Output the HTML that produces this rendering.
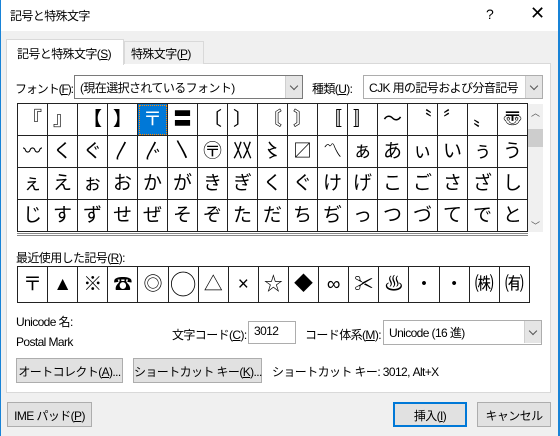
<!DOCTYPE html>
<html><head><meta charset="utf-8"><style>
*{box-sizing:border-box;margin:0;padding:0}
body{width:560px;height:436px;overflow:hidden;background:#f0f0f0;font-family:"Liberation Sans","Noto Sans CJK JP",sans-serif;font-size:12px;letter-spacing:-0.6px;color:#000;position:relative}
.a{position:absolute;white-space:nowrap}
.title{left:0;top:0;width:560px;height:31px;background:#fff}
.bl{left:0;top:0;width:1px;height:436px;background:#1883d7}
.br{left:558px;top:0;width:2px;height:436px;background:#1883d7}
.panel{left:6px;top:63px;width:545px;height:330px;background:#fff;border:1px solid #d9d9d9}
.tab1{left:6px;top:39px;width:118px;height:26px;background:#fff;border:1px solid #d9d9d9;border-bottom:none;padding:5px 0 0 10px;z-index:2}
.tab2{left:124px;top:41px;width:80px;height:23px;background:#f0f0f0;border:1px solid #d9d9d9;border-bottom:none;padding:3px 0 0 6px}
.combo{background:#fff;border:1px solid #7a7a7a;height:24px;padding:3px 0 0 5px;overflow:hidden}
.dd{position:absolute;right:0;top:0;width:17px;height:22px;background:#e5e5e5;border-left:1px solid #cfcfcf}
.dd:after{content:"";position:absolute;left:5px;top:7px;width:5px;height:5px;border-right:1px solid #555;border-bottom:1px solid #555;transform:rotate(45deg)}
table{border-collapse:collapse;position:absolute;letter-spacing:0}
td{border:1px solid #222;text-align:center;padding:0;font-size:19px;line-height:20px;overflow:hidden}
.grid td{width:30px;height:32px}
.sel{background:#0078d7;color:#fff;outline:1px dotted #f80;outline-offset:-2px}
.btn{background:#e1e1e1;border:1px solid #adadad;text-align:center;padding-top:4px;height:25px}
u{text-decoration:underline}
</style></head><body>
<div class="a title"></div>
<div class="a bl"></div><div class="a br"></div>
<div class="a" style="left:10px;top:7px">記号と特殊文字</div>
<div class="a" style="left:486px;top:6px;font-size:14px">?</div>
<div class="a" style="left:530px;top:3px;font-size:18px;font-weight:300">✕</div>
<div class="a panel"></div>
<div class="a tab1">記号と特殊文字(<u>S</u>)</div>
<div class="a tab2">特殊文字(<u>P</u>)</div>
<div class="a" style="left:15px;top:80px;letter-spacing:-1.1px">フォント(<u>F</u>):</div>
<div class="a combo" style="left:74px;top:75px;width:229px">(現在選択されているフォント)<span class="dd"></span></div>
<div class="a" style="left:312px;top:80px">種類(<u>U</u>):</div>
<div class="a combo" style="left:363px;top:75px;width:180px;border-color:#adadad">CJK 用の記号および分音記号<span class="dd"></span></div>
<table class="grid" style="left:17px;top:103px;width:511px;border:1px solid #888">
<tr><td>『</td><td>』</td><td><b>【</b></td><td><b>】</b></td><td class="sel">〒</td><td><b>〓</b></td><td>〔</td><td>〕</td><td>〘</td><td>〙</td><td>〚</td><td>〛</td><td>〜</td><td>〝</td><td>〞</td><td>〟</td><td>〠</td></tr>
<tr><td>〰</td><td>く</td><td>ぐ</td><td>〳</td><td>〴</td><td>〵</td><td>〶</td><td>〷</td><td>〻</td><td>〼</td><td>〽</td><td>ぁ</td><td>あ</td><td>ぃ</td><td>い</td><td>ぅ</td><td>う</td></tr>
<tr><td>ぇ</td><td>え</td><td>ぉ</td><td>お</td><td>か</td><td>が</td><td>き</td><td>ぎ</td><td>く</td><td>ぐ</td><td>け</td><td>げ</td><td>こ</td><td>ご</td><td>さ</td><td>ざ</td><td>し</td></tr>
<tr><td>じ</td><td>す</td><td>ず</td><td>せ</td><td>ぜ</td><td>そ</td><td>ぞ</td><td>た</td><td>だ</td><td>ち</td><td>ぢ</td><td>っ</td><td>つ</td><td>づ</td><td>て</td><td>で</td><td>と</td></tr>
</table>
<div class="a" style="left:528px;top:104px;width:15px;height:128px;background:#f0f0f0"></div>
<div class="a" style="left:531px;top:106px;font-size:9px;color:#555">︿</div>
<div class="a" style="left:528px;top:129px;width:15px;height:18px;background:#cdcdcd"></div>
<div class="a" style="left:531px;top:219px;font-size:9px;color:#555">﹀</div>
<div class="a" style="left:17px;top:233px;width:511px;height:3px;border-top:1px solid #888;border-bottom:1px solid #888"></div>
<div class="a" style="left:16px;top:249px">最近使用した記号(<u>R</u>):</div>
<table class="grid" style="left:17px;top:266px;width:513px;border:1px solid #888">
<tr style="height:36px"><td>〒</td><td>▲</td><td>※</td><td>☎</td><td>◎</td><td style="font-size:26px">◯</td><td>△</td><td>×</td><td>☆</td><td>◆</td><td>∞</td><td>✂</td><td>♨</td><td>・</td><td>・</td><td>㈱</td><td>㈲</td></tr>
</table>
<div class="a" style="left:16px;top:313px">Unicode 名:</div>
<div class="a" style="left:16px;top:335px">Postal Mark</div>
<div class="a" style="left:172px;top:326px">文字コード(<u>C</u>):</div>
<div class="a combo" style="left:248px;top:321px;width:48px;height:23px;border-color:#adadad;padding-top:2px">3012</div>
<div class="a" style="left:305px;top:326px">コード体系(<u>M</u>):</div>
<div class="a combo" style="left:383px;top:320px;width:159px;height:25px;border-color:#adadad">Unicode (16 進)<span class="dd"></span></div>
<div class="a btn" style="left:16px;top:358px;width:107px">オートコレクト(<u>A</u>)...</div>
<div class="a btn" style="left:133px;top:358px;width:129px">ショートカット キー(<u>K</u>)...</div>
<div class="a" style="left:272px;top:363px">ショートカット キー: 3012, Alt+X</div>
<div class="a btn" style="left:7px;top:402px;width:85px">IME パッド(<u>P</u>)</div>
<div class="a btn" style="left:393px;top:402px;width:74px;border:2px solid #0078d7;padding-top:3px">挿入(<u>I</u>)</div>
<div class="a btn" style="left:477px;top:402px;width:74px">キャンセル</div>
</body></html>
